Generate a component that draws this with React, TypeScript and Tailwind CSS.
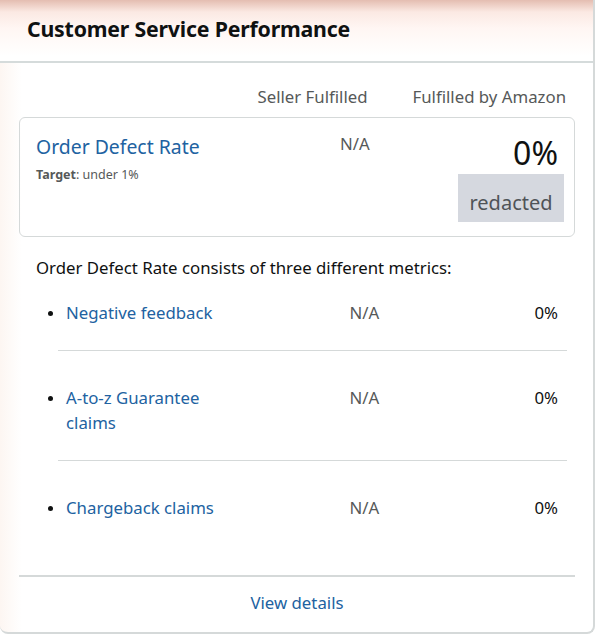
const metrics = [
  { name: "Negative feedback", seller: "N/A", fba: "0%" },
  { name: "A-to-z Guarantee claims", seller: "N/A", fba: "0%" },
  { name: "Chargeback claims", seller: "N/A", fba: "0%" },
];

export default function App() {
  return (
    <div className="w-[595px] h-[635px] bg-white font-['Noto_Sans',sans-serif] text-[#0f1111]">
      <div className="relative w-[595px] h-[634px] flex flex-col rounded-b-lg border-r-2 border-b-2 border-[#d5d9d9] overflow-hidden bg-[linear-gradient(to_right,#fdf6f2_0px,#ffffff_22px)]">
        <div className="h-[63px] shrink-0 flex items-center px-[27px] border-b-2 border-[#d5dbdb] bg-[linear-gradient(to_bottom,#e4bdb1_0px,#fbe9e3_12px,#fff6f3_28px,#ffffff_56px)]">
          <h2 className="text-[21.3px] font-bold tracking-[-0.2px] leading-none mt-[-4px]">
            Customer Service Performance
          </h2>
        </div>

        <div className="flex-1 flex flex-col pl-[19px] pr-[18px]">
          <div className="flex justify-end gap-[45px] pr-[9px] pt-[21px] h-[54px] text-[16.8px] text-[#565959]">
            <span>Seller Fulfilled</span>
            <span>Fulfilled by Amazon</span>
          </div>

          <div className="h-[120px] border border-[#d5d9d9] rounded-md flex pl-[16px] pr-[10px] pt-[16px]">
            <div className="flex-1">
              <div className="text-[19.4px] text-[#2162a1] leading-[26px]">Order Defect Rate</div>
              <div className="text-[12.5px] text-[#565959] mt-[6px]">
                <span className="font-bold">Target</span>: under 1%
              </div>
            </div>
            <div className="w-[118px] text-[16.8px] text-[#565959] leading-[20px]">N/A</div>
            <div className="flex flex-col items-end">
              <div className="text-[32px] leading-[38px] mr-[6px]">0%</div>
              <div className="mt-[2px] w-[106px] h-[48px] bg-[#d5d8df] text-[20px] text-[#4f5358] flex items-end justify-center pb-[9px] leading-none">
                redacted
              </div>
            </div>
          </div>

          <p className="text-[16.8px] mt-[20px] pl-[17px] leading-[22px]">
            Order Defect Rate consists of three different metrics:
          </p>

          <ul className="mt-[21px] pl-[39px] pr-[8px]">
            {metrics.map((m, i) => (
              <li
                key={m.name}
                className={`flex ${i === 0 ? "" : "pt-[34px]"} ${i < metrics.length - 1 ? "pb-[25px] border-b border-[#d5d9d9]" : ""}`}
              >
                <div className="flex-1 flex">
                  <span className="w-[5px] h-[5px] rounded-full bg-[#0f1111] mt-[11px] ml-[-10px] mr-[13px] shrink-0"></span>
                  <span className="w-[175px] text-[16.8px] leading-[25px] text-[#2162a1]">{m.name}</span>
                </div>
                <span className="w-[185px] text-[16.8px] leading-[25px] text-[#565959]">{m.seller}</span>
                <span className="text-[16.8px] leading-[25px] pr-[9px]">{m.fba}</span>
              </li>
            ))}
          </ul>

          <div className="mt-auto border-t-2 border-[#d5d9d9] h-[57px] flex items-center justify-center">
            <a className="text-[16.8px] text-[#2162a1] mt-[-4px]">View details</a>
          </div>
        </div>
      </div>
    </div>
  );
}
